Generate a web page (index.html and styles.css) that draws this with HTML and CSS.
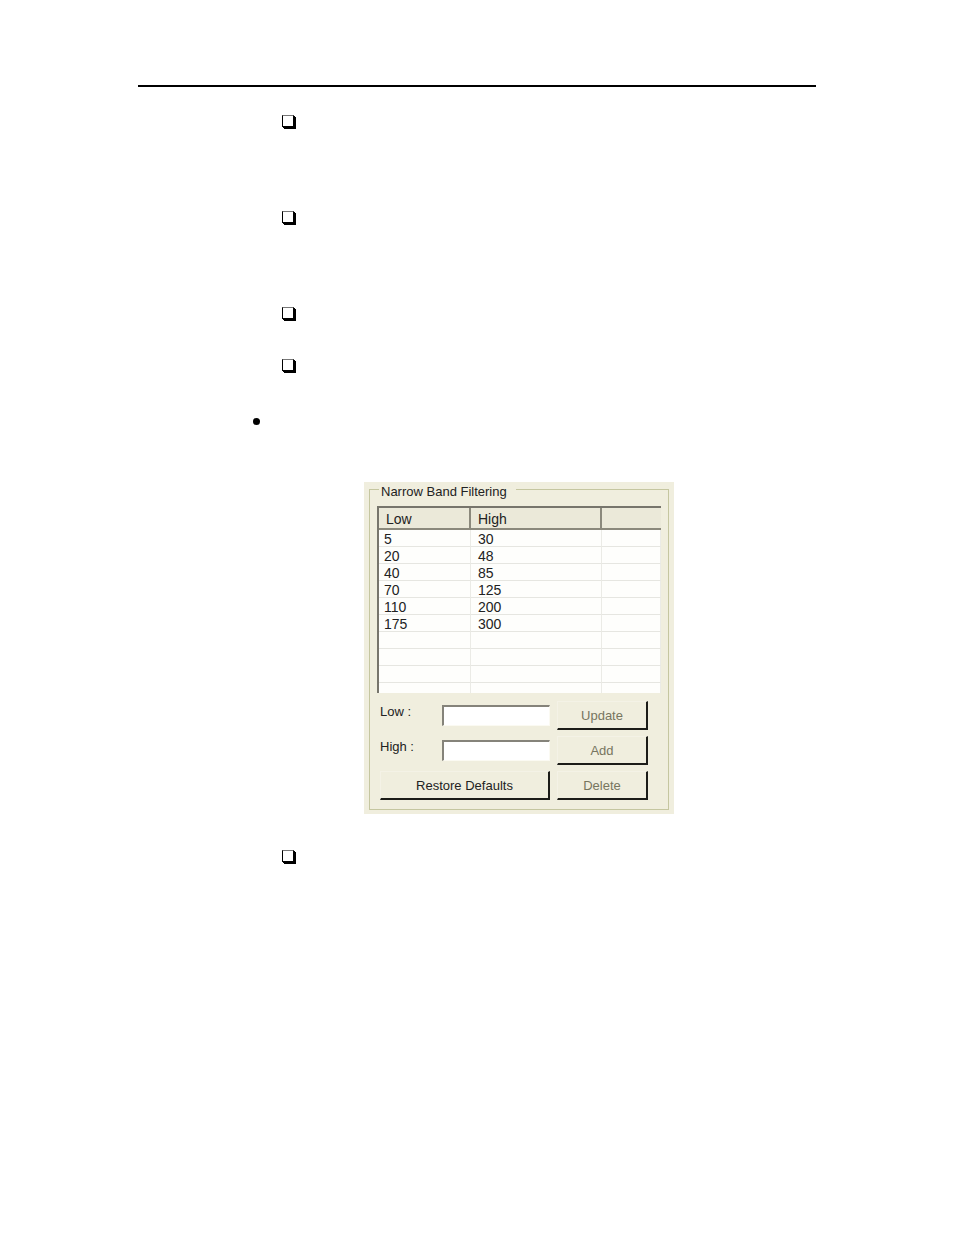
FILE: index.html
```html
<!DOCTYPE html>
<html lang="en">
<head>
    <meta charset="utf-8">
    <title>Narrow Band Filtering</title>
    <link rel="stylesheet" href="styles.css">
</head>

<body>
  <main class="page">

    <ul class="steps">
        <li class="step tall"><span class="box"></span></li>
        <li class="step tall"><span class="box"></span></li>
        <li class="step"><span class="box"></span></li>
        <li class="step"><span class="box"></span></li>
    </ul>

    <ul class="topics">
        <li class="topic"><span class="dot"></span></li>
    </ul>

    <div class="panel">
      <fieldset class="group">
        <legend>Narrow Band Filtering</legend>

        <table class="bands">
            <colgroup>
                <col class="col-low">
                <col class="col-high">
                <col>
            </colgroup>
            <thead>
                <tr><th>Low</th><th>High</th><th></th></tr>
            </thead>
            <tbody>
                <tr><td>5</td><td>30</td><td></td></tr>
                <tr><td>20</td><td>48</td><td></td></tr>
                <tr><td>40</td><td>85</td><td></td></tr>
                <tr><td>70</td><td>125</td><td></td></tr>
                <tr><td>110</td><td>200</td><td></td></tr>
                <tr><td>175</td><td>300</td><td></td></tr>
                <tr><td></td><td></td><td></td></tr>
                <tr><td></td><td></td><td></td></tr>
                <tr><td></td><td></td><td></td></tr>
                <tr class="last"><td></td><td></td><td></td></tr>
            </tbody>
        </table>

        <div class="controls">
            <label for="low">Low :</label>
            <input type="text" id="low">
            <button type="button" disabled>Update</button>

            <label for="high">High :</label>
            <input type="text" id="high">
            <button type="button" disabled>Add</button>

            <button type="button" class="restore">Restore Defaults</button>
            <button type="button" disabled>Delete</button>
        </div>
      </fieldset>
    </div>

    <ul class="steps">
        <li class="step"><span class="box"></span></li>
    </ul>

  </main>
</body>

</html>
```

FILE: styles.css
```css
* {
  box-sizing: border-box;
}

body {
  margin: 0;
  background: #fff;
  color: #222;
  font-family: "Liberation Sans", Arial, sans-serif;
  font-size: 13px;
}

.page {
  margin: 85px 138px 0;
  border-top: 2px solid #000;
}

/* lists */
.steps,
.topics {
  list-style: none;
  margin: 0;
  padding: 0;
}
.steps {
  padding: 28px 0 0 144px;
}
.step {
  height: 52px;
}
.step.tall {
  height: 96px;
}
.box {
  display: block;
  width: 12px;
  height: 12px;
  background: #fff;
  border: 1px solid #000;
  border-top-color: #777;
  box-shadow: 1px 1px #000, 2px 2px #000;
}
.topics {
  padding: 7px 0 0 115px;
}
.topic {
  height: 64px;
}
.dot {
  display: block;
  width: 7px;
  height: 7px;
  border-radius: 50%;
  background: #000;
}

/* dialog panel */
.panel {
  max-width: 310px;
  margin: 0 0 8px 226px;
  padding: 0 5px 4px;
  background: #f0eede;
}
.group {
  margin: 0;
  padding: 10px 7px 9px;
  border: 1px solid #c5c6a0;
}
legend {
  height: 14px;
  margin-left: 2px;
  padding: 0 9px 0 2px;
  line-height: 20px;
}

/* band table */
.bands {
  width: 100%;
  table-layout: fixed;
  border-collapse: separate;
  border-spacing: 0;
  border-left: 2px solid #77756c;
  border-top: 2px solid #77756c;
  background: #fefefc;
  font-size: 14px;
}
.col-low {
  width: 92px;
}
.col-high {
  width: 131px;
}
.bands th {
  height: 22px;
  padding: 2px 7px 0;
  background: #ebe9d9;
  border-right: 2px solid #8b897c;
  border-bottom: 2px solid #8b897c;
  font-weight: normal;
  text-align: left;
  line-height: 18px;
}
.bands th:last-child {
  border-right: 0;
}
.bands td {
  height: 17px;
  padding: 2px 5px 0;
  border-right: 1px solid #ebebe6;
  border-bottom: 1px solid #e6e6e1;
  line-height: 14px;
}
.bands td + td {
  padding-left: 7px;
}
.bands .last td {
  height: 10px;
  border-bottom: 0;
}

/* form controls */
.controls {
  display: grid;
  grid-template-columns: 55px 1fr 91px;
  grid-auto-rows: 29px;
  gap: 6px 7px;
  align-items: center;
  margin: 8px 13px 0 3px;
}
label {
  align-self: start;
  line-height: 22px;
}
input {
  width: 100%;
  height: 21px;
  padding: 0 3px;
  border: 1px solid #fbfaf2;
  border-top: 2px solid #85837a;
  border-left: 2px solid #85837a;
  background: #fff;
  font: inherit;
}
button {
  height: 29px;
  padding: 0;
  border: 1px solid #f4f2e6;
  border-right: 2px solid #1c1c18;
  border-bottom: 2px solid #1c1c18;
  background: #f0eede;
  color: #222;
  font: inherit;
}
button:disabled {
  color: #77755f;
}
.restore {
  grid-column: span 2;
}
```
